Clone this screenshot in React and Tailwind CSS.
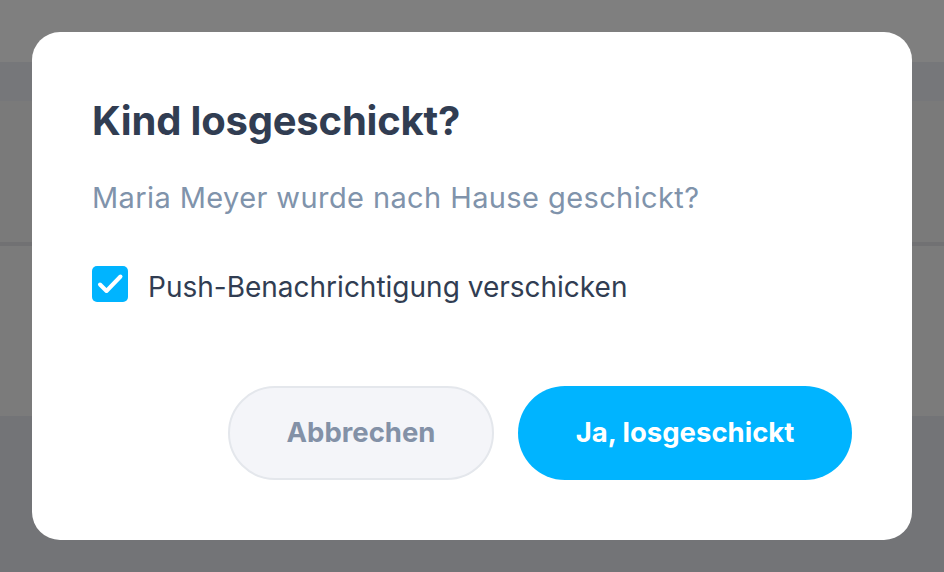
import React from "react";

export default function App() {
  return (
    <div className="relative w-[944px] h-[572px] overflow-hidden" style={{ fontFamily: "Inter, 'Noto Sans', sans-serif" }}>
      <div className="flex flex-col h-full">
        <div className="h-[62px] bg-[#7f7f7f]" />
        <div className="h-[39px] bg-[#76777a]" />
        <div className="h-[141px] bg-[#7a7a7a]" />
        <div className="h-[4px] bg-[#717173]" />
        <div className="h-[170px] bg-[#7b7b7b]" />
        <div className="flex-1 bg-[#737477]" />
      </div>
      <div className="absolute left-[32px] top-[32px] w-[880px] h-[508px] bg-white rounded-[28px] p-[60px] flex flex-col">
        <h1 className="text-[40px] leading-[48px] font-bold text-[#313d52] mt-[5px] tracking-[-0.2px]">Kind losgeschickt?</h1>
        <p className="text-[29px] leading-[36px] tracking-[0.4px] text-[#8093ab] mt-[35px]">Maria Meyer wurde nach Hause geschickt?</p>
        <label className="flex items-start gap-[20px] mt-[50px]">
          <span className="w-[36px] h-[36px] shrink-0 rounded-[5px] bg-[#00b4ff] flex items-center justify-center">
            <svg width="36" height="36" viewBox="0 0 36 36" fill="none" stroke="white" strokeWidth="4" strokeLinecap="round" strokeLinejoin="round">
              <path d="M8 18.5l6.5 6.5L28.5 10.5" />
            </svg>
          </span>
          <span className="text-[28px] leading-[36px] mt-[3px] text-[#313d52]">Push-Benachrichtigung verschicken</span>
        </label>
        <div className="mt-auto flex justify-end gap-[24px]">
          <button className="w-[266px] h-[94px] rounded-full bg-[#f4f5f9] border-2 border-[#e4e7ec] text-[27.5px] font-bold text-[#8391a7]">Abbrechen</button>
          <button className="w-[334px] h-[94px] rounded-full bg-[#00b4ff] text-[27.5px] font-bold text-white">Ja, losgeschickt</button>
        </div>
      </div>
    </div>
  );
}
